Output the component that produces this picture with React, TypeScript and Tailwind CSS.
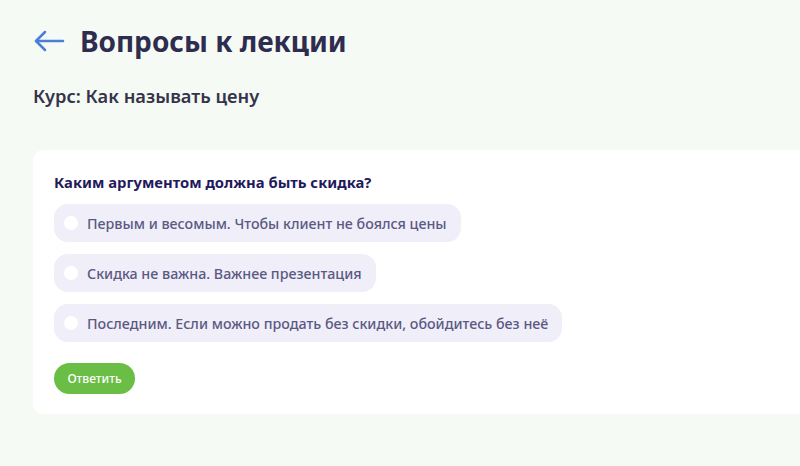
import React from 'react';

const options = [
    'Первым и весомым. Чтобы клиент не боялся цены',
    'Скидка не важна. Важнее презентация',
    'Последним. Если можно продать без скидки, обойдитесь без неё',
];

function BackArrow() {
    return (
        <svg width="32" height="24" viewBox="0 0 32 24" fill="none" stroke="#4a7fd8" strokeWidth="2.5" strokeLinecap="round" strokeLinejoin="round">
            <path d="M30 12H3" />
            <path d="M12 3L3 12l9 9" />
        </svg>
    );
}

export default function App() {
    return (
        <div className="min-h-[466px] w-full bg-[#f5faf4] overflow-hidden" style={{ fontFamily: '"Noto Sans", "Open Sans", sans-serif' }}>
            <div className="pl-[33px] pt-[26px]">
                <div className="flex items-center gap-[15px] h-[30px]">
                    <BackArrow />
                    <h1 className="text-[28px] font-bold text-[#2e2c4f] leading-none">Вопросы к лекции</h1>
                </div>
                <div className="mt-[31px] text-[18.3px] font-semibold text-[#35344a] leading-none">Курс: Как называть цену</div>

                <div className="mt-[45px] bg-white rounded-l-[10px] w-[800px] pl-[21px] pt-[22px] pb-[20px]">
                    <div className="text-[14.8px] font-bold text-[#1f1b5c] leading-[20px]">Каким аргументом должна быть скидка?</div>
                    <div className="mt-[12px] flex flex-col items-start gap-[12px]">
                        {options.map((o) => (
                            <label key={o} className="flex items-center h-[38px] rounded-[14px] bg-[#efeef9] pl-[10px] pr-[14px]">
                                <span className="w-[14px] h-[14px] rounded-full bg-white" />
                                <span className="ml-[9px] text-[14.25px] font-medium text-[#5b5982]">{o}</span>
                            </label>
                        ))}
                    </div>
                    <button className="mt-[21px] h-[31px] w-[81px] rounded-full bg-[#6abd45] text-white text-[12px] font-medium">Ответить</button>
                </div>
            </div>
        </div>
    );
}
